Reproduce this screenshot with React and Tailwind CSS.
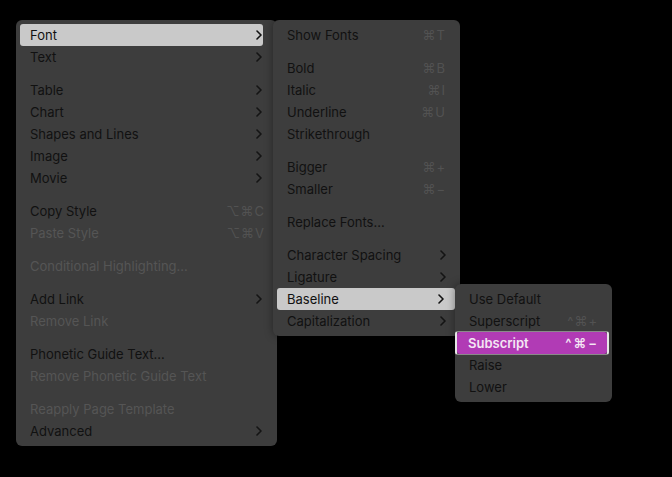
import React from 'react';

const Chevron = ({ className = '' }) => (
  <svg width="6" height="10" viewBox="0 0 6 10" className={className}>
    <path d="M1 1l4 4-4 4" fill="none" stroke="currentColor" strokeWidth="1.6" strokeLinecap="round" strokeLinejoin="round" />
  </svg>
);

function Item({ label, shortcut, sub, disabled, active, wide = 'px-[10px]', children }) {
  return (
    <div className="relative">
      <div
        className={`h-[22px] mx-[4px] rounded-[4px] flex items-center justify-between ${wide} ${
          active ? 'bg-[#c9c9c9]' : ''
        } ${disabled ? 'text-[#555555]' : 'text-[#111111]'}`}
      >
        <span>{label}</span>
        {shortcut && <span className="text-[#525252] tracking-[1px]">{shortcut}</span>}
        {sub && <Chevron className="text-[#141414]" />}
      </div>
      {children}
    </div>
  );
}

const Sep = () => <div className="h-[11px]" />;

export default function App() {
  return (
    <div
      className="w-[672px] h-[477px] bg-black overflow-hidden text-[13px] leading-none"
      style={{ fontFamily: 'Inter, "DejaVu Sans", sans-serif' }}
    >
      <div className="relative ml-[16px] mt-[20px] w-[261px] bg-[#3d3d3d] rounded-[6px] py-[4px]">
        <div className="relative">
          <div className="h-[22px] ml-[4px] mr-[14px] rounded-[3px] bg-[#c9c9c9] flex items-center justify-between pl-[10px] pr-[1px] text-[#111111]">
            <span>Font</span>
            <Chevron />
          </div>
          {/* Font submenu */}
          <div className="absolute left-[257px] top-[-4px] w-[187px] bg-[#3d3d3d] rounded-[6px] py-[4px] z-10 shadow-[0_0_8px_rgba(0,0,0,0.4)]">
            <Item label="Show Fonts" shortcut="⌘T" />
            <Sep />
            <Item label="Bold" shortcut="⌘B" />
            <Item label="Italic" shortcut="⌘I" />
            <Item label="Underline" shortcut="⌘U" />
            <Item label="Strikethrough" />
            <Sep />
            <Item label="Bigger" shortcut="⌘+" />
            <Item label="Smaller" shortcut="⌘−" />
            <Sep />
            <Item label="Replace Fonts…" />
            <Sep />
            <Item label="Character Spacing" sub />
            <Item label="Ligature" sub />
            <div className="relative">
              <div className="h-[22px] ml-[4px] mr-[5px] rounded-[3px] bg-[#c9c9c9] flex items-center justify-between pl-[10px] pr-[11px] text-[#111111]">
                <span>Baseline</span>
                <Chevron />
              </div>
              {/* Baseline submenu */}
              <div className="absolute left-[182px] top-[-4px] w-[157px] bg-[#3d3d3d] rounded-[6px] py-[4px] z-20 shadow-[0_0_8px_rgba(0,0,0,0.4)]">
                <Item label="Use Default" />
                <Item label="Superscript" shortcut="^⌘+" />
                <div className="h-[22px] flex items-center">
                  <div className="h-[24px] w-[154px] border-x-2 border-y border-x-[#e6e6e6] border-y-[#8a8a8a] rounded-[3px] flex">
                    <div className="flex-1 bg-[#b13bb5] rounded-[3px] flex items-center justify-between pl-[11px] pr-[8px] text-[#f4e6f4] font-semibold">
                      <span>Subscript</span>
                      <span className="tracking-[2px]">^⌘−</span>
                    </div>
                  </div>
                </div>
                <Item label="Raise" />
                <Item label="Lower" />
              </div>
            </div>
            <Item label="Capitalization" sub />
          </div>
        </div>
        <Item label="Text" sub wide="pl-[10px] pr-[11px]" />
        <Sep />
        <Item label="Table" sub wide="pl-[10px] pr-[11px]" />
        <Item label="Chart" sub wide="pl-[10px] pr-[11px]" />
        <Item label="Shapes and Lines" sub wide="pl-[10px] pr-[11px]" />
        <Item label="Image" sub wide="pl-[10px] pr-[11px]" />
        <Item label="Movie" sub wide="pl-[10px] pr-[11px]" />
        <Sep />
        <Item label="Copy Style" shortcut="⌥⌘C" wide="pl-[10px] pr-[8px]" />
        <Item label="Paste Style" shortcut="⌥⌘V" disabled wide="pl-[10px] pr-[8px]" />
        <Sep />
        <Item label="Conditional Highlighting…" disabled />
        <Sep />
        <Item label="Add Link" sub wide="pl-[10px] pr-[11px]" />
        <Item label="Remove Link" disabled />
        <Sep />
        <Item label="Phonetic Guide Text…" />
        <Item label="Remove Phonetic Guide Text" disabled />
        <Sep />
        <Item label="Reapply Page Template" disabled />
        <Item label="Advanced" sub wide="pl-[10px] pr-[11px]" />
      </div>
    </div>
  );
}
